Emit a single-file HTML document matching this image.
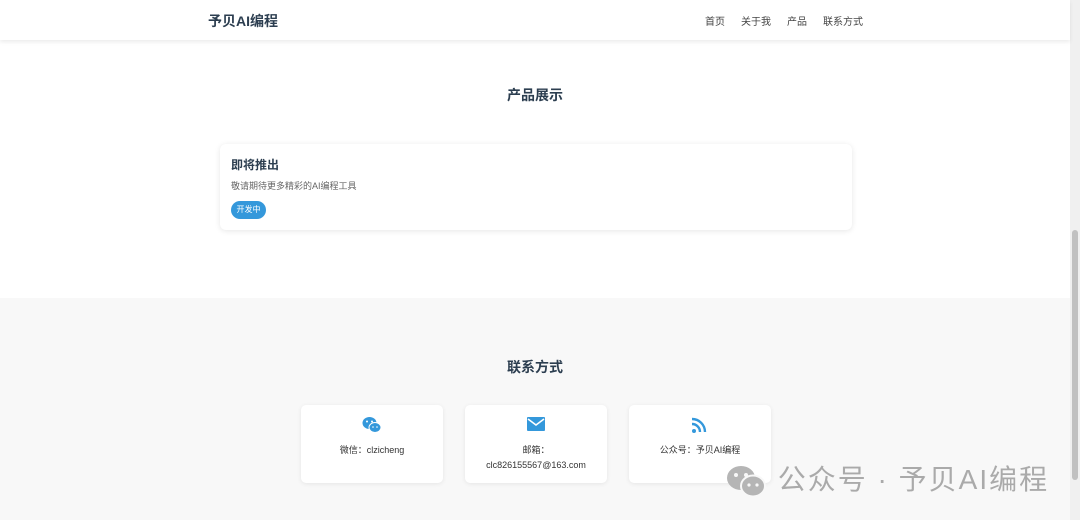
<!DOCTYPE html>
<html><head><meta charset="utf-8"><style>
*{margin:0;padding:0;box-sizing:border-box}
body{width:1080px;height:520px;overflow:hidden;background:#fff;font-family:"Liberation Sans","Noto Sans CJK SC",sans-serif;color:#2c3e50;position:relative}
.hdr{position:absolute;left:0;top:0;width:1070px;height:40px;background:#fff;box-shadow:0 2px 4px rgba(0,0,0,.08);z-index:2}
.logo{position:absolute;left:208px;top:11px;font-size:14px;font-weight:bold;color:#2c3e50}
.nav{position:absolute;right:207px;top:13px;font-size:10px;color:#444}
.nav span{margin-left:16px}
h2{position:absolute;width:1070px;text-align:center;font-size:14px;font-weight:bold}
.card{position:absolute;left:220px;top:144px;width:632px;height:86px;background:#fff;border-radius:6px;box-shadow:0 1px 6px rgba(0,0,0,.1)}
.card h3{position:absolute;left:11px;top:12px;font-size:12px;font-weight:bold}
.card p{position:absolute;left:11px;top:35px;font-size:9px;color:#666}
.badge{position:absolute;left:11px;top:57px;width:35px;height:18px;border-radius:9px;background:#3498db;color:#fff;font-size:8px;line-height:18px;text-align:center}
.gray{position:absolute;left:0;top:298px;width:1070px;height:222px;background:#f8f8f8}
.c{position:absolute;top:405px;width:142px;height:78px;background:#fff;border-radius:5px;box-shadow:0 1px 5px rgba(0,0,0,.08);text-align:center;font-size:9px;color:#333;line-height:15px}
.c svg{position:absolute;left:61px;top:11px}
.c div{position:absolute;left:0;width:142px;top:38px}
.wm{position:absolute;left:726px;top:458px;color:#aaa;font-size:28px;letter-spacing:2px}
.sb{position:absolute;right:0;top:0;width:10px;height:520px;background:#f0f0f0}
.th{position:absolute;right:2px;top:230px;width:6px;height:250px;background:#c1c1c1;border-radius:3px}
</style></head><body>
<div class="hdr"><div class="logo">予贝AI编程</div><div class="nav"><span>首页</span><span>关于我</span><span>产品</span><span>联系方式</span></div></div>
<h2 style="top:85px">产品展示</h2>
<div class="card"><h3>即将推出</h3><p>敬请期待更多精彩的AI编程工具</p><div class="badge">开发中</div></div>
<div class="gray"></div>
<h2 style="top:357px">联系方式</h2>
<div class="c" style="left:301px"><svg width="20" height="18" viewBox="0 0 20 18"><ellipse cx="7.5" cy="7" rx="7" ry="6" fill="#3498db"/><ellipse cx="13" cy="11.5" rx="6" ry="5" fill="#3498db" stroke="#fff" stroke-width="1"/><circle cx="5" cy="5.5" r="1" fill="#fff"/><circle cx="10" cy="5.5" r="1" fill="#fff"/><circle cx="11" cy="11" r=".8" fill="#fff"/><circle cx="15" cy="11" r=".8" fill="#fff"/></svg><div>微信：clzicheng</div></div>
<div class="c" style="left:465px"><svg width="20" height="16" viewBox="0 0 20 16"><rect x="1" y="1" width="18" height="14" rx="1" fill="#3498db"/><path d="M2 3l8 6 8-6" stroke="#fff" stroke-width="1.6" fill="none"/></svg><div>邮箱：<br>clc826155567@163.com</div></div>
<div class="c" style="left:629px"><svg width="20" height="18" viewBox="0 0 20 18"><circle cx="4" cy="15" r="2" fill="#3498db"/><path d="M2 8a8 8 0 0 1 8 8M2 3a13 13 0 0 1 13 13" stroke="#3498db" stroke-width="2.4" fill="none"/></svg><div>公众号：予贝AI编程</div></div>
<div class="wm"><svg width="42" height="36" viewBox="0 0 42 36" style="vertical-align:middle"><ellipse cx="15" cy="14" rx="14" ry="12" fill="#b5b5b5"/><ellipse cx="27" cy="22" rx="12" ry="10.5" fill="#b5b5b5" stroke="#f8f8f8" stroke-width="2"/><circle cx="10" cy="11" r="2" fill="#f8f8f8"/><circle cx="20" cy="11" r="2" fill="#f8f8f8"/><circle cx="23" cy="21" r="1.6" fill="#f8f8f8"/><circle cx="31" cy="21" r="1.6" fill="#f8f8f8"/></svg> 公众号 · 予贝AI编程</div>
<div class="sb"><div class="th"></div></div>
</body></html>
